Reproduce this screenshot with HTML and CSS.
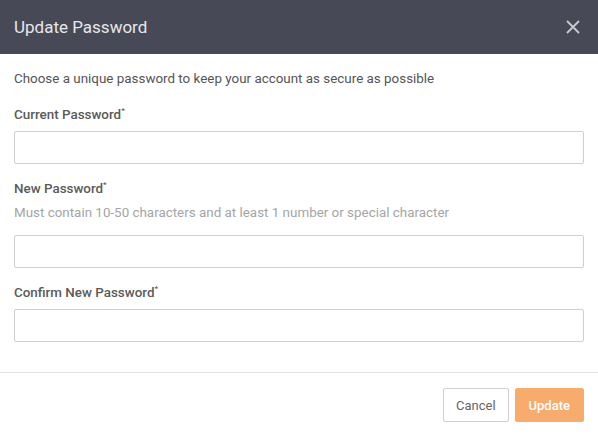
FILE: index.html
```html
<!DOCTYPE html>
<html lang="en">
<head>
    <meta charset="UTF-8">
    <meta name="viewport" content="width=device-width, initial-scale=1.0">
    <title>Update Password</title>
    <link rel="stylesheet" href="styles.css">
</head>
<body>
    <div class="modal">
        <div class="modal-header">
            <h1>Update Password</h1>
            <button class="close" aria-label="Close">
                <svg width="14" height="14" viewBox="0 0 14 14">
                    <path d="M1 1L13 13M13 1L1 13" stroke="#c9cbd1" stroke-width="1.8" fill="none"/>
                </svg>
            </button>
        </div>

        <div class="modal-body">
            <p class="intro">Choose a unique password to keep your account as secure as possible</p>

            <div class="field">
                <label for="current">Current Password<sup>*</sup></label>
                <input type="password" id="current">
            </div>

            <div class="field">
                <label for="new">New Password<sup>*</sup></label>
                <p class="hint">Must contain 10-50 characters and at least 1 number or special character</p>
                <input type="password" id="new">
            </div>

            <div class="field">
                <label for="confirm">Confirm New Password<sup>*</sup></label>
                <input type="password" id="confirm">
            </div>
        </div>

        <div class="modal-footer">
            <button class="btn btn-cancel">Cancel</button>
            <button class="btn btn-update">Update</button>
        </div>
    </div>
</body>
</html>
```

FILE: styles.css
```css
body {
    margin: 0;
    padding: 0;
    font-family: Roboto, "Liberation Sans", sans-serif;
    background: #fff;
    color: #555;
}

.modal {
    width: 598px;
    background: #fff;
}

.modal-header {
    height: 54px;
    background-color: #474a56;
    display: flex;
    align-items: center;
    justify-content: space-between;
    padding: 0 18px 0 14px;
    box-sizing: border-box;
}

.modal-header h1 {
    margin: 0;
    font-size: 17px;
    font-weight: 400;
    color: #e6e7ea;
}

.close {
    background: none;
    border: none;
    padding: 0;
    display: flex;
    cursor: pointer;
}

.modal-body {
    padding: 17px 14px 30px;
}

.intro {
    margin: 0 0 20px 0;
    font-size: 13.4px;
    line-height: 16px;
    color: #555;
}

.field {
    margin-bottom: 17px;
}

.field:last-child {
    margin-bottom: 0;
}

.field label {
    display: block;
    font-size: 13.4px;
    line-height: 16px;
    font-weight: 500;
    color: #5a5a5a;
    margin-bottom: 8px;
}

.field sup {
    font-size: 8px;
    vertical-align: 6px;
    line-height: 0;
}

.hint {
    margin: 0 0 14px 0;
    font-size: 13.4px;
    line-height: 16px;
    color: #a5a5a5;
}

.field input {
    display: block;
    width: 100%;
    height: 33px;
    box-sizing: border-box;
    border: 1px solid #cfcfcf;
    border-radius: 2px;
    padding: 0 8px;
    font-size: 13px;
    font-family: inherit;
}

.modal-footer {
    border-top: 1px solid #e2e2e2;
    display: flex;
    justify-content: flex-end;
    gap: 6px;
    padding: 15px 14px;
}

.btn {
    height: 34px;
    padding: 0 12px;
    border-radius: 2px;
    font-family: inherit;
    font-size: 13px;
    cursor: pointer;
}

.btn-cancel {
    background: #fff;
    border: 1px solid #cfcfcf;
    color: #666;
}

.btn-update {
    background: #f7ab6d;
    border: 1px solid #f7ab6d;
    color: #fff;
    font-weight: 500;
    padding: 0 13px;
}
```
